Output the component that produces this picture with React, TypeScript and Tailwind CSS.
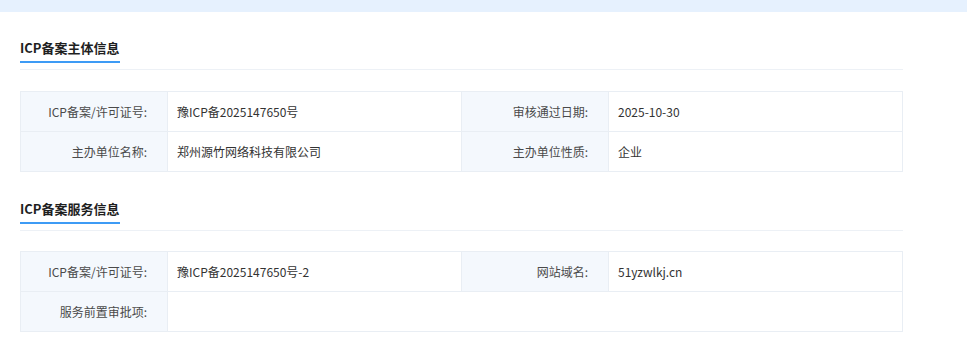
const FONT = { fontFamily: '"Noto Sans CJK SC", "Noto Sans", sans-serif' };

type Cell = { label: string; value: string; span?: boolean };

const SUBJECT: Cell[][] = [
  [
    { label: 'ICP备案/许可证号:', value: '豫ICP备2025147650号' },
    { label: '审核通过日期:', value: '2025-10-30' },
  ],
  [
    { label: '主办单位名称:', value: '郑州源竹网络科技有限公司' },
    { label: '主办单位性质:', value: '企业' },
  ],
];

const SERVICE: Cell[][] = [
  [
    { label: 'ICP备案/许可证号:', value: '豫ICP备2025147650号-2' },
    { label: '网站域名:', value: '51yzwlkj.cn' },
  ],
  [{ label: '服务前置审批项:', value: '', span: true }],
];

function Heading({ title }: { title: string }) {
  return (
    <div className="flex border-b border-[#edf1f6] pb-[6px]">
      <span className="border-b-2 border-[#3d9bf5] pb-[3px] text-[13px] leading-5 font-bold text-[#1f1f1f]">
        {title}
      </span>
    </div>
  );
}

function InfoTable({ rows }: { rows: Cell[][] }) {
  return (
    <div className="grid grid-cols-[147px_294px_146px_1fr] border-t border-l border-[#e9eef4] text-[12px] leading-5">
      {rows.map((row, ri) =>
        row.map((c, ci) => (
          <div key={`${ri}-${ci}`} className={c.span ? 'col-span-4 grid grid-cols-[147px_1fr]' : 'col-span-2 grid grid-cols-[147px_1fr]'}>
            <div className="h-[40px] flex items-center justify-end pr-[20px] bg-[#f4f8fd] text-[#4a4a4a] border-r border-b border-[#e9eef4]">
              {c.label}
            </div>
            <div className="h-[40px] flex items-center pl-[9px] text-[#333] border-r border-b border-[#e9eef4]">
              {c.value}
            </div>
          </div>
        ))
      )}
    </div>
  );
}

export default function App() {
  return (
    <div className="w-[967px] h-[350px] bg-white overflow-hidden" style={FONT}>
      <div className="h-[12px] bg-[#e6f1fe]" />
      <div className="w-[883px] ml-[20px]">
        <div className="pt-[26px]">
          <Heading title="ICP备案主体信息" />
        </div>
        <div className="mt-[21px]">
          <InfoTable rows={SUBJECT} />
        </div>
        <div className="pt-[27px]">
          <Heading title="ICP备案服务信息" />
        </div>
        <div className="mt-[20px]">
          <InfoTable rows={SERVICE} />
        </div>
      </div>
    </div>
  );
}
